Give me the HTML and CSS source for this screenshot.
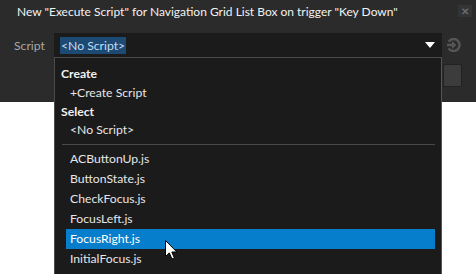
FILE: index.html
```html
<!DOCTYPE html>
<html lang="en">

<head>
  <meta charset="UTF-8">
  <title>Execute Script</title>
  <link rel="stylesheet" href="styles.css">
</head>

<body>
  <div class="dialog">
    <div class="titlebar">
      <span class="title">New "Execute Script" for Navigation Grid List Box on trigger "Key Down"</span>
      <span class="close">&#x2715;</span>
    </div>
    <div class="row">
      <span class="label">Script</span>
      <div class="combo">
        <span class="selected">&lt;No Script&gt;</span>
        <span class="arrow"></span>
      </div>
      <svg class="goto" width="15" height="14" viewBox="0 0 15 14">
        <path d="M2.6 3.6 A6 6 0 1 1 2.6 10.4" fill="none" stroke="#555" stroke-width="2.4"/>
        <path d="M1 5.8 H6 V3 L10.5 7 L6 11 V8.2 H1 Z" fill="#555"/>
      </svg>
    </div>
    <div class="row2">
      <span class="btn"></span>
    </div>
  </div>

  <div class="popup">
    <div class="group">Create</div>
    <div class="item">+Create Script</div>
    <div class="group small">Select</div>
    <div class="item">&lt;No Script&gt;</div>
    <div class="sep"></div>
    <div class="item">ACButtonUp.js</div>
    <div class="item">ButtonState.js</div>
    <div class="item">CheckFocus.js</div>
    <div class="item">FocusLeft.js</div>
    <div class="item hover">FocusRight.js</div>
    <div class="item">InitialFocus.js</div>
  </div>

  <svg class="cursor" width="13" height="20" viewBox="0 0 13 20">
    <path d="M0.5 0.5 V16.5 L4.3 12.9 L7 19 L9.4 18 L6.8 12 H11.8 Z" fill="#fff" stroke="#000" stroke-width="1"/>
  </svg>
</body>

</html>
```

FILE: styles.css
```css
body {
  margin: 0;
  width: 476px;
  height: 274px;
  overflow: hidden;
  background: #fff;
  font-family: Lato, "Noto Sans", sans-serif;
  font-size: 12.2px;
  position: relative;
}

.dialog {
  height: 102px;
  background: #2b2b2b;
}

.titlebar {
  height: 33px;
  display: flex;
  align-items: flex-start;
  justify-content: space-between;
}

.title {
  color: #f2f2f2;
  font-size: 12px;
  margin: 4px 0 0 17px;
}

.close {
  width: 14px;
  height: 12px;
  margin: 5px 4px 0 0;
  background: #343434;
  color: #6a6a6a;
  font-size: 10px;
  line-height: 12px;
  text-align: center;
  font-weight: bold;
}

.row {
  display: flex;
  align-items: center;
  height: 24px;
}

.label {
  width: 54px;
  padding-left: 14px;
  box-sizing: border-box;
  color: #a8a8a8;
}

.combo {
  width: 388px;
  height: 24px;
  background: #1b1b1b;
  display: flex;
  align-items: center;
  justify-content: space-between;
  box-sizing: border-box;
  padding: 0 3px 0 6px;
}

.selected {
  background: #1c4a72;
  color: #c6dcf2;
  padding: 1px 1px;
  line-height: 15px;
}

.arrow {
  width: 0;
  height: 0;
  border-left: 5px solid transparent;
  border-right: 5px solid transparent;
  border-top: 6px solid #fff;
  margin-right: 4px;
}

.goto {
  margin-left: 4px;
}

.row2 {
  display: flex;
  justify-content: flex-end;
  padding-top: 7px;
}

.btn {
  width: 19px;
  height: 23px;
  margin-right: 14px;
  background: #3c3c3c;
  border: 1px solid #222;
  border-radius: 2px;
  box-sizing: border-box;
}

.popup {
  position: absolute;
  left: 54px;
  top: 57px;
  width: 388px;
  height: 230px;
  box-sizing: border-box;
  background: #1b1b1b;
  border: 1px solid #4a4a4a;
  border-right-color: #555;
  padding: 6px 6px 0 11px;
  color: #e6e6e6;
}

.group {
  font-weight: bold;
  height: 19px;
  line-height: 19px;
  margin-left: -5px;
  color: #f0f0f0;
}

.group.small {
  height: 17px;
  line-height: 17px;
}

.item {
  height: 20px;
  line-height: 20px;
  padding-left: 4px;
}

.hover {
  background: #077ecb;
  color: #fff;
}

.sep {
  height: 1px;
  background: #4a4a4a;
  margin: 4px 0 4px -4px;
}

.cursor {
  position: absolute;
  left: 165px;
  top: 240px;
}
```
